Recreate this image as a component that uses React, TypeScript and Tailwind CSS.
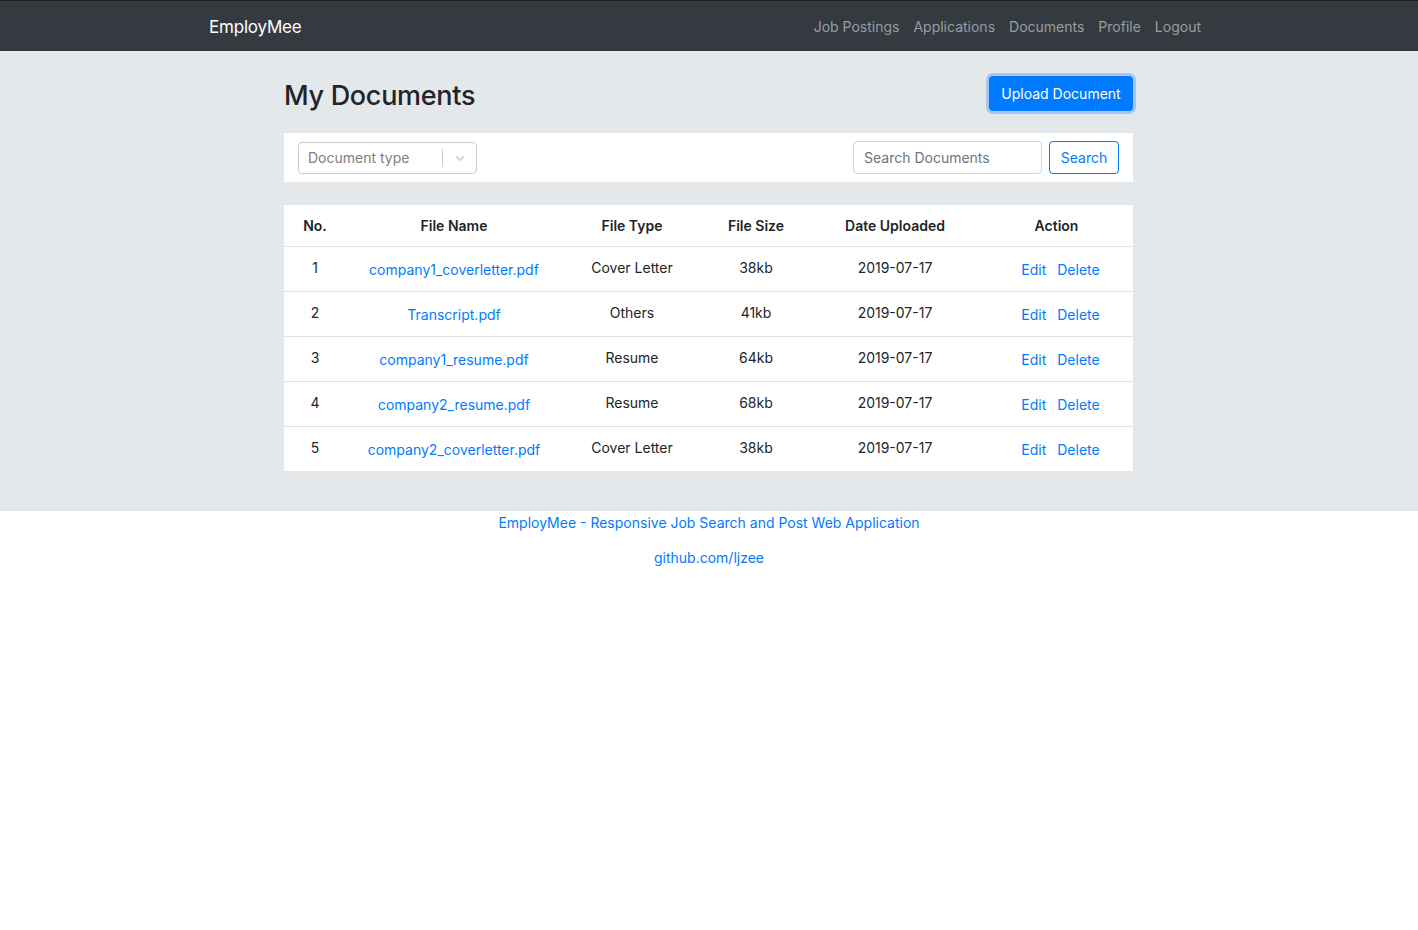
import React from "react";

const docs = [
  { id: 1, name: "company1_coverletter.pdf", type: "Cover Letter", size: "38kb", date: "2019-07-17" },
  { id: 2, name: "Transcript.pdf", type: "Others", size: "41kb", date: "2019-07-17" },
  { id: 3, name: "company1_resume.pdf", type: "Resume", size: "64kb", date: "2019-07-17" },
  { id: 4, name: "company2_resume.pdf", type: "Resume", size: "68kb", date: "2019-07-17" },
  { id: 5, name: "company2_coverletter.pdf", type: "Cover Letter", size: "38kb", date: "2019-07-17" },
];

const navLinks = ["Job Postings", "Applications", "Documents", "Profile", "Logout"];

export default function App() {
  return (
    <div className="min-h-screen bg-white text-[#212529] font-['Inter','Liberation_Sans',sans-serif] text-[14px]">
      {/* navbar */}
      <nav className="h-[51px] bg-[#343a40] border-t border-[#222]">
        <div className="w-[1000px] mx-auto h-full flex items-center justify-between">
          <a className="block pt-[3px] text-white text-[17px] tracking-[-0.2px]">EmployMee</a>
          <ul className="flex pr-[1px]">
            {navLinks.map((l) => (
              <li key={l}>
                <a className="px-[7px] text-[#9a9da0] block">{l}</a>
              </li>
            ))}
          </ul>
        </div>
      </nav>

      {/* main */}
      <main className="bg-[#e5e8eb] pb-[40px]">
        <div className="w-[850px] mx-auto pr-[1px]">
          <div className="flex items-start justify-between pt-[23px] pb-[18px]">
            <h2 className="mt-[2px] text-[27px] font-medium tracking-[-0.3px] leading-[39px]">My Documents</h2>
            <button className="mt-[2px] h-[35px] w-[144px] rounded-[4px] bg-[#007bff] text-white text-[14px] shadow-[0_0_0_3px_rgba(110,170,255,0.55)]">
              Upload Document
            </button>
          </div>

          <div className="bg-white h-[49px] flex items-center justify-between px-[14px]">
            <div className="w-[179px] h-[32px] border border-[#cccccc] rounded-[4px] flex items-center">
              <span className="flex-1 pl-[9px] text-[#808080]">Document type</span>
              <span className="w-px h-[18px] bg-[#cccccc]" />
              <span className="w-[33px] flex justify-center text-[#cccccc]">
                <svg width="14" height="14" viewBox="0 0 20 20" fill="currentColor">
                  <path d="M4.516 7.548c.436-.446 1.043-.481 1.576 0L10 11.295l3.908-3.747c.533-.481 1.141-.446 1.574 0 .436.445.408 1.197 0 1.615-.406.418-4.695 4.502-4.695 4.502a1.095 1.095 0 0 1-1.576 0S4.924 9.581 4.516 9.163c-.409-.418-.436-1.170 0-1.615z" />
                </svg>
              </span>
            </div>
            <div className="flex items-center gap-[7px]">
              <input
                placeholder="Search Documents"
                className="w-[189px] h-[33px] border border-[#ced4da] rounded-[4px] px-[10px] placeholder:text-[#6c757d] outline-none"
              />
              <button className="h-[33px] w-[70px] border border-[#007bff] rounded-[4px] text-[#007bff]">
                Search
              </button>
            </div>
          </div>

          <table className="w-full mt-[23px] bg-white text-center border-collapse">
            <thead>
              <tr className="h-[41px] border-b border-[#dee2e6]">
                <th className="w-[62px] font-semibold">No.</th>
                <th className="w-[216px] font-semibold">File Name</th>
                <th className="w-[140px] font-semibold">File Type</th>
                <th className="w-[108px] font-semibold">File Size</th>
                <th className="w-[170px] font-semibold">Date Uploaded</th>
                <th className="w-[153px] font-semibold">Action</th>
              </tr>
            </thead>
            <tbody>
              {docs.map((d, i) => (
                <tr key={d.id} className={`h-[45px] ${i > 0 ? "border-t border-[#dee2e6]" : ""}`}>
                  <td className="align-top pt-[10px]">{d.id}</td>
                  <td className="align-top pt-[12px]">
                    <a className="text-[#007bff]">{d.name}</a>
                  </td>
                  <td className="align-top pt-[10px]">{d.type}</td>
                  <td className="align-top pt-[10px]">{d.size}</td>
                  <td className="align-top pt-[10px]">{d.date}</td>
                  <td className="align-top pt-[12px] pl-[8px]">
                    <a className="text-[#007bff]">Edit</a>
                    <a className="text-[#007bff] ml-[11px]">Delete</a>
                  </td>
                </tr>
              ))}
            </tbody>
          </table>
        </div>
      </main>

      {/* footer */}
      <footer className="text-center text-[#007bff] pt-[1px]">
        <p className="leading-[22px]">EmployMee - Responsive Job Search and Post Web Application</p>
        <p className="leading-[22px] mt-[13px]">github.com/ljzee</p>
      </footer>
    </div>
  );
}
